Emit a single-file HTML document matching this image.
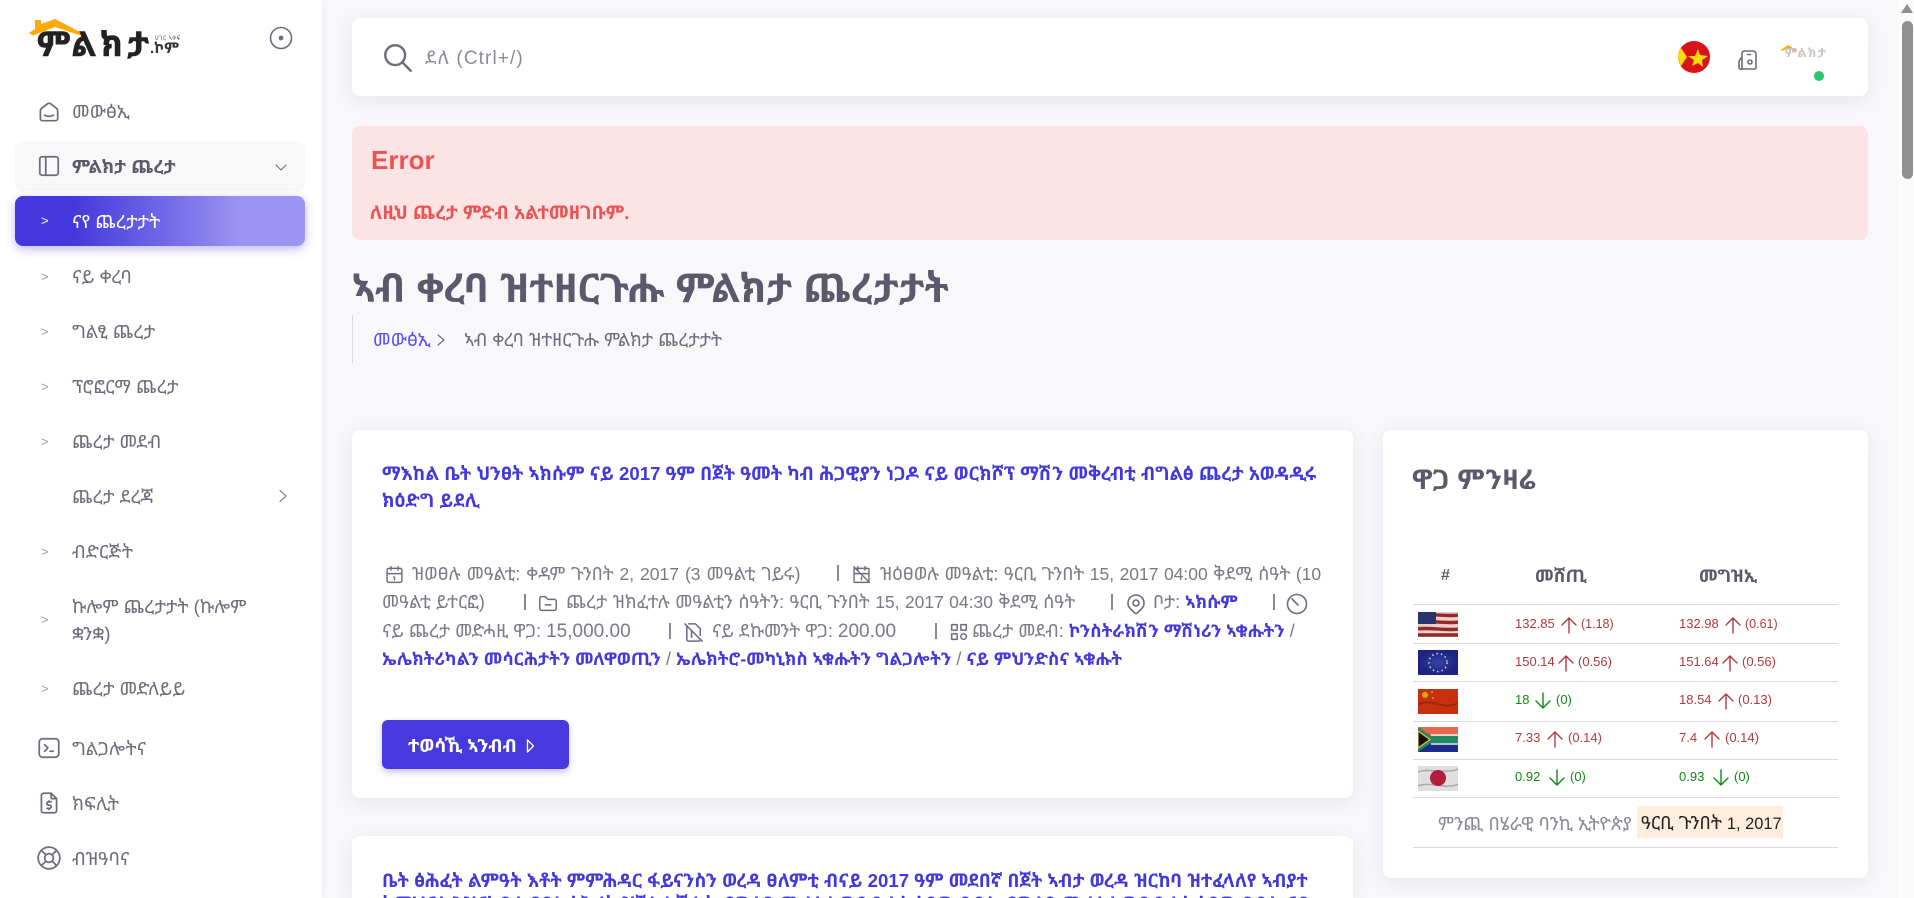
<!DOCTYPE html>
<html lang="ti"><head><meta charset="utf-8"><title>ምልክታ</title>
<style>
*{box-sizing:border-box}
html,body{margin:0;padding:0;width:1914px;height:898px;overflow:hidden;background:#f8f8fb;font-family:"Liberation Sans","Noto Sans Ethiopic","Abyssinica SIL","DejaVu Sans","Noto Sans CJK JP",sans-serif;color:#6f6b7d}
#root{position:relative;width:1914px;height:898px;overflow:hidden;background:#f8f8fb;contain:paint}
.a{position:absolute;white-space:nowrap}
svg.i{position:absolute;fill:none;stroke:#6f6b7d;stroke-width:1.6;stroke-linecap:round;stroke-linejoin:round}
#side{position:absolute;left:0;top:0;width:322px;height:898px;background:#fff;box-shadow:0 0 8px rgba(75,70,92,.06)}
.m{position:absolute;left:72px;font-size:18.5px;line-height:26px;white-space:nowrap;color:#6f6b7d;transform:translateY(-13px)}
.g{position:absolute;left:41px;font-size:13px;line-height:16px;color:#9a97a6;transform:translateY(-8px)}
.card{position:absolute;background:#fff;border-radius:8px;box-shadow:0 4px 18px rgba(75,70,92,.10)}
.t{font-size:18.6px;font-weight:700;color:#4338dc;left:382px;line-height:26px}
.l{font-size:18px;line-height:26px;color:#7c7889}
.n{font-size:17.5px;color:#7c7889}
.n2{font-size:19px;color:#7c7889}
.b{color:#4338dc;font-weight:700;font-size:17.5px}
.sep{position:absolute;width:1.500px;height:16px;background:#8a8797}
.r{position:absolute;left:1413px;width:425px;height:1px;background:#dbdade}
.v{position:absolute;font-size:13px;line-height:18px;white-space:nowrap}
.p{font-size:12px}
.up{color:#b23a3a}.dn{color:#118a11}
svg.ar{stroke-width:1.400}
</style></head><body><div id="root">

<div id="side">
  <svg class="a" style="left:28px;top:16px" width="60" height="24" viewBox="0 0 60 24"><path d="M1 17 L7 13 L7 4 L13 4 L13 8 L27 3 L54 17 L54 20 L27 11 L5 19.500Z" fill="#ffa90a"/></svg>
  <div class="a" style="left:37px;top:27px;font-size:34px;line-height:36px;font-weight:700;letter-spacing:4.200px;color:#222;-webkit-text-stroke:.5px #222">ምልክታ</div>
  <div class="a" style="left:150px;top:41px;font-size:15px;line-height:16px;font-weight:700;color:#333">.ኮም</div>
  <div class="a" style="left:155px;top:36px;font-size:6px;line-height:6px;letter-spacing:.5px;color:#555">ሀገር ኣቀፍ</div>
  <svg class="i" style="left:269px;top:26px" width="24" height="24" viewBox="0 0 24 24"><circle cx="12" cy="12" r="10.5"/><circle cx="12" cy="12" r="1.6" fill="#6f6b7d"/></svg>

  <svg class="i" style="left:36px;top:99px" width="26" height="26" viewBox="0 0 24 24"><path d="M19 8.71l-5.333-4.148a2.666 2.666 0 0 0-3.274 0l-5.334 4.148a2.665 2.665 0 0 0-1.029 2.105v7.2a2 2 0 0 0 2 2h12a2 2 0 0 0 2-2v-7.2c0-.823-.38-1.6-1.03-2.105"/><path d="M16 15c-2.21 1.333-5.792 1.333-8 0"/></svg>
  <div class="m" style="top:112px">መውፅኢ</div>

  <div class="a" style="left:15px;top:141px;width:290px;height:50px;background:#f8f8f8;border-radius:8px"></div>
  <svg class="i" style="left:36px;top:153px" width="26" height="26" viewBox="0 0 24 24"><rect x="3.5" y="3.5" width="17" height="17" rx="2"/><path d="M9 4v16"/></svg>
  <div class="m" style="top:167px;font-weight:700;color:#5d596c">ምልክታ ጨረታ</div>
  <svg class="i" style="left:274px;top:160px" width="14" height="14" viewBox="0 0 14 14"><path d="M2 5l5 5 5-5" stroke-width="1.1"/></svg>

  <div class="a" style="left:15px;top:196px;width:290px;height:50px;border-radius:8px;background:linear-gradient(90deg,#4339dc 0,#4339dc 20%,#7b72ea 58%,#9d95f3 78%,#9d95f3 100%);box-shadow:0 3px 10px rgba(67,57,220,.35)"></div>
  <div class="g" style="top:221px;color:#fff">&gt;</div>
  <div class="m" style="top:222px;color:#fff">ናየ ጨረታታት</div>

  <div class="g" style="top:277px">&gt;</div><div class="m" style="top:277px">ናይ ቀረባ</div>
  <div class="g" style="top:332px">&gt;</div><div class="m" style="top:332px">ግልፂ ጨረታ</div>
  <div class="g" style="top:387px">&gt;</div><div class="m" style="top:387px">ፕሮፎርማ ጨረታ</div>
  <div class="g" style="top:442px">&gt;</div><div class="m" style="top:442px">ጨረታ መደብ</div>
  <div class="m" style="top:497px">ጨረታ ደረጃ</div>
  <svg class="i" style="left:277px;top:488px" width="14" height="16" viewBox="0 0 14 16"><path d="M3 2.500l6 5.500-6 5.500" stroke-width="1.1"/></svg>
  <div class="g" style="top:552px">&gt;</div><div class="m" style="top:552px">ብድርጅት</div>
  <div class="g" style="top:620px">&gt;</div><div class="m" style="top:607px">ኩሎም ጨረታታት (ኩሎም</div><div class="m" style="top:634px">ቋንቋ)</div>
  <div class="g" style="top:689px">&gt;</div><div class="m" style="top:689px">ጨረታ መድለይይ</div>

  <svg class="i" style="left:36px;top:735px" width="26" height="26" viewBox="0 0 24 24"><path d="M8 9l3 3-3 3M13 15h3"/><rect x="3" y="3.500" width="18" height="17" rx="3"/></svg>
  <div class="m" style="top:749px">ግልጋሎትና</div>
  <svg class="i" style="left:36px;top:790px" width="26" height="26" viewBox="0 0 24 24"><path d="M14 3v4a1 1 0 0 0 1 1h4"/><path d="M17 21h-10a2 2 0 0 1-2-2v-14a2 2 0 0 1 2-2h7l5 5v11a2 2 0 0 1-2 2z"/><path d="M14 11h-2.500a1.500 1.500 0 0 0 0 3h1a1.500 1.500 0 0 1 0 3h-2.500M12 17v1m0-8v1"/></svg>
  <div class="m" style="top:804px">ክፍሊት</div>
  <svg class="i" style="left:36px;top:845px" width="26" height="26" viewBox="0 0 24 24"><circle cx="12" cy="12" r="4"/><circle cx="12" cy="12" r="10"/><path d="M15 15l4 4M9 15l-4 4M5 5l4 4M19 5l-4 4"/></svg>
  <div class="m" style="top:859px">ብዝዓባና</div>
</div>

<!-- header -->
<div class="card" style="left:352px;top:18px;width:1516px;height:78px"></div>
<svg class="i" style="left:381px;top:41px;stroke-width:1.7" width="34" height="34" viewBox="0 0 24 24"><circle cx="10" cy="10" r="7"/><path d="M21 21l-6-6"/></svg>
<div class="a" style="left:425px;top:46px;font-size:19px;line-height:26px;letter-spacing:1.100px;color:#8d8a98">ደለ (Ctrl+/)</div>
<svg class="a" style="left:1678px;top:41px" width="32" height="32" viewBox="0 0 32 32"><circle cx="16" cy="16" r="16" fill="#da121a"/><path d="M0 16A16 16 0 0 1 3 7L9 16 3 25A16 16 0 0 1 0 16Z" fill="#fcdd09"/><path d="M20 8l2 6 8 1-6 4 1 7-5-4-6 3 2-6-6-4 7 0z" fill="#fcdd09"/></svg>
<svg class="i" style="left:1736px;top:47px" width="26" height="26" viewBox="0 0 26 26"><path d="M8 4h9a3 3 0 0 1 3 3v13.500a1.500 1.500 0 0 1-1.500 1.500H7.500A1.500 1.500 0 0 1 6 20.500V7a3 3 0 0 1 2-3z"/><path d="M6 10L3 14v6a2 2 0 0 0 3 2"/><circle cx="14" cy="15" r="2"/><path d="M11.500 7.500h3"/></svg>
<svg class="a" style="left:1781px;top:44px" width="16" height="9" viewBox="0 0 16 9"><path d="M0 6L7 1l8 5-1 1-7-3-6 3z" fill="#ffa90a"/></svg>
<div class="a" style="left:1785px;top:46px;font-size:12.500px;line-height:14px;letter-spacing:1.400px;color:#c4c4c4;font-weight:700">ምልክታ</div>
<div class="a" style="left:1814px;top:71px;width:10px;height:10px;border-radius:50%;background:#28c76f"></div>

<!-- alert -->
<div class="a" style="left:352px;top:126px;width:1516px;height:114px;background:#fce4e4;border-radius:8px"></div>
<div class="a" style="left:371px;top:144px;font-size:26px;line-height:32px;font-weight:700;color:#ea5455">Error</div>
<div class="a" style="left:370px;top:200px;font-size:18.700px;line-height:26px;font-weight:700;color:#ea5455">ለዚህ ጨረታ ምድብ አልተመዘገቡም.</div>

<!-- title -->
<div class="a" style="left:352px;top:266px;font-size:39.800px;line-height:46px;font-weight:700;color:#5d596c">ኣብ ቀረባ ዝተዘርጉሑ ምልክታ ጨረታታት</div>
<div class="a" style="left:352px;top:315px;width:1px;height:48px;background:#d6dce1"></div>
<div class="a" style="left:373px;top:327px;font-size:18.500px;line-height:26px;color:#5a50f0">መውፅኢ</div>
<svg class="i" style="left:436px;top:333px" width="10" height="14" viewBox="0 0 10 14"><path d="M2 2l6 5-6 5" stroke-width="1.2"/></svg>
<div class="a" style="left:464px;top:327px;font-size:18.200px;line-height:26px;color:#6f6b7d">ኣብ ቀረባ ዝተዘርጉሑ ምልክታ ጨረታታት</div>

<!-- card 1 -->
<div class="card" style="left:352px;top:430px;width:1001px;height:368px"></div>
<div class="a t" style="top:461px">ማእከል ቤት ህንፀት ኣክሱም ናይ 2017 ዓም በጀት ዓመት ካብ ሕጋዊያን ነጋዶ ናይ ወርክሾፕ ማሽን መቅረብቲ ብግልፅ ጨረታ አወዳዲሩ</div>
<div class="a t" style="top:488px">ክዕድግ ይደሊ</div>

<svg class="i" style="left:384px;top:564px" width="21" height="21" viewBox="0 0 24 24"><rect x="3.500" y="5" width="17" height="16" rx="2"/><path d="M16 3v4M8 3v4M4 11h16M11 15h1v3"/></svg>
<div class="a l" style="left:412px;top:561px;word-spacing:1px">ዝወፀሉ መዓልቲ: ቀዳም ጉንበት <span class="n">2, 2017</span> <span class="n">(3</span> መዓልቲ ገይሩ)</div>
<div class="sep" style="left:837px;top:565px"></div>
<svg class="i" style="left:851px;top:564px" width="21" height="21" viewBox="0 0 24 24"><rect x="3.500" y="5" width="17" height="16" rx="1"/><path d="M16 3v4M8 3v4M4 11h16M3 3l18 18M12 15v3"/></svg>
<div class="a l" style="left:880px;top:561px;word-spacing:.6px">ዝዕፀወሉ መዓልቲ: ዓርቢ ጉንበት <span class="n">15, 2017 04:00</span> ቅደሚ ሰዓት <span class="n">(10</span></div>

<div class="a l" style="left:382px;top:589px">መዓልቲ ይተርፎ)</div>
<div class="sep" style="left:524px;top:594px"></div>
<svg class="i" style="left:537px;top:593px" width="22" height="22" viewBox="0 0 24 24"><path d="M5 4h4l3 3h7a2 2 0 0 1 2 2v8a2 2 0 0 1-2 2h-14a2 2 0 0 1-2-2v-11a2 2 0 0 1 2-2M9 13h6"/></svg>
<div class="a l" style="left:566px;top:589px;word-spacing:.5px">ጨረታ ዝክፈተሉ መዓልቲን ሰዓትን: ዓርቢ ጉንበት <span class="n">15, 2017 04:30</span> ቅደሚ ሰዓት</div>
<div class="sep" style="left:1111px;top:594px"></div>
<svg class="i" style="left:1124px;top:592px" width="24" height="24" viewBox="0 0 24 24"><circle cx="12" cy="11" r="3"/><path d="M17.657 16.657l-4.243 4.243a2 2 0 0 1-2.827 0l-4.244-4.243a8 8 0 1 1 11.314 0z"/></svg>
<div class="a l" style="left:1153px;top:589px">ቦታ: <span class="b">ኣክሱም</span></div>
<div class="sep" style="left:1273px;top:594px"></div>
<svg class="i" style="left:1285px;top:592px" width="24" height="24" viewBox="0 0 24 24"><circle cx="12" cy="12" r="9.500"/><path d="M7 7l6 6"/></svg>

<div class="a l" style="left:382px;top:618px">ናይ ጨረታ መድሓዚ ዋጋ: <span class="n2">15,000.00</span></div>
<div class="sep" style="left:669px;top:623px"></div>
<svg class="i" style="left:682px;top:621px" width="23" height="23" viewBox="0 0 24 24"><path d="M3 3l18 18M7 3h7l5 5v7M19 19a2 2 0 0 1-2 2h-10a2 2 0 0 1-2-2v-14"/><path d="M10 17V10"/></svg>
<div class="a l" style="left:712px;top:618px">ናይ ደኩመንት ዋጋ: <span class="n2">200.00</span></div>
<div class="sep" style="left:935px;top:623px"></div>
<svg class="i" style="left:948px;top:621px" width="22" height="22" viewBox="0 0 24 24"><path d="M4 4h6v6h-6zM14 4h6v6h-6zM4 14h6v6h-6z"/><circle cx="17" cy="17" r="3"/></svg>
<div class="a l" style="left:972px;top:618px">ጨረታ መደብ: <span class="b">ኮንስትራክሽን ማሽነሪን ኣቁሑትን</span> /</div>
<div class="a l" style="left:382px;top:646px"><span class="b">ኤሌክትሪካልን መሳርሕታትን መለዋወጢን</span> / <span class="b">ኤሌክትሮ-መካኒክስ ኣቁሑትን ግልጋሎትን</span> / <span class="b">ናይ ምህንድስና ኣቁሑት</span></div>

<div class="a" style="left:382px;top:720px;width:187px;height:49px;background:#4639de;border-radius:6px;box-shadow:0 3px 7px rgba(70,57,222,.3)"></div>
<div class="a" style="left:408px;top:733px;font-size:18.500px;line-height:26px;font-weight:700;color:#fff">ተወሳኺ ኣንብብ</div>
<svg class="i" style="left:525px;top:738px;stroke:#fff" width="12" height="16" viewBox="0 0 12 16"><path d="M2.500 2l6 6-6 6z" stroke-width="1.400"/></svg>

<!-- card 2 -->
<div class="card" style="left:352px;top:836px;width:1001px;height:62px;border-radius:8px 8px 0 0;overflow:hidden">
  <div class="a t" style="left:30px;top:32px">ቤት ፅሕፈት ልምዓት እቶት ምምሕዳር ፋይናንስን ወረዳ ፀለምቲ ብናይ 2017 ዓም መደበኛ በጀት ኣብታ ወረዳ ዝርከባ ዝተፈላለየ ኣብያተ</div>
  <div class="a t" style="left:30px;top:55px;height:7px;overflow:hidden;width:940px">ትምህርቲ ንዝርከባ ኣብያተ ፅሕፈት ዝኾኑ ኣቑሑት ብግልፂ ጨረታ ኣወዳዲሩ ክዕድግ ይደሊ ብግልፂ ጨረታ ኣወዳዲሩ ክዕድግ ይደሊ ናይ</div>
</div>

<!-- right card -->
<div class="card" style="left:1383px;top:430px;width:485px;height:448px"></div>
<div class="a" style="left:1412px;top:464px;font-size:27.500px;line-height:32px;font-weight:700;color:#5d596c">ዋጋ ምንዛሬ</div>
<div class="a" style="left:1441px;top:567px;font-size:16px;line-height:18px;font-weight:700;color:#5d596c">#</div>
<div class="a" style="left:1535px;top:563px;font-size:17.800px;line-height:26px;font-weight:700;color:#5d596c">መሸጢ</div>
<div class="a" style="left:1699px;top:563px;font-size:17.800px;line-height:26px;font-weight:700;color:#5d596c">መግዝኢ</div>
<div class="r" style="top:604px"></div><div class="r" style="top:643px"></div><div class="r" style="top:681px"></div><div class="r" style="top:721px"></div><div class="r" style="top:759px"></div><div class="r" style="top:797px"></div><div class="r" style="top:847px"></div>

<!-- flags -->
<svg class="a" style="left:1418px;top:612px" width="40" height="25" viewBox="0 0 40 25"><rect width="40" height="25" fill="#f0cfc6"/><path d="M0 3C10 1 28 5 40 3M0 10C10 8 28 12 40 10M0 17C10 15 28 19 40 17M0 23h40" stroke="#8f2a2e" stroke-width="3.400" fill="none"/><rect width="18" height="12" fill="#2a3468"/></svg>
<svg class="a" style="left:1418px;top:650px" width="40" height="25" viewBox="0 0 40 25"><defs><radialGradient id="e"><stop offset="0" stop-color="#3342a8"/><stop offset="1" stop-color="#1c2380"/></radialGradient></defs><rect width="40" height="25" fill="url(#e)"/><circle cx="20" cy="12.500" r="9" fill="none" stroke="#d9d9c8" stroke-width="1.500" stroke-dasharray="1.500 3"/></svg>
<svg class="a" style="left:1418px;top:689px" width="40" height="25" viewBox="0 0 40 25"><rect width="40" height="25" fill="#c6300f"/><path d="M0 16C12 8 26 22 40 14" stroke="#a32509" stroke-width="2" fill="none"/><circle cx="7" cy="6" r="3" fill="#d9a512"/><circle cx="14" cy="3" r="1" fill="#d9a512"/><circle cx="15" cy="9" r="1" fill="#d9a512"/></svg>
<svg class="a" style="left:1418px;top:727px" width="40" height="25" viewBox="0 0 40 25"><rect width="40" height="9" fill="#e8674e"/><rect y="16" width="40" height="9" fill="#1e2a8a"/><rect y="9" width="40" height="7" fill="#1d8a62"/><path d="M0 0L18 12.500 0 25" fill="#1d8a62"/><path d="M0 4L12 12.500 0 21z" fill="#111" stroke="#e8c040" stroke-width="1.200"/><path d="M13 8h27M13 17h27" stroke="#f4f0ea" stroke-width="1.500"/></svg>
<svg class="a" style="left:1418px;top:766px" width="40" height="25" viewBox="0 0 40 25"><rect width="40" height="25" fill="#dfdfdf"/><path d="M0 20C12 15 28 24 40 18M0 6C10 2 30 8 40 3" stroke="#aaa" stroke-width="1.500" fill="none"/><circle cx="20" cy="12" r="8" fill="#b01f3f"/></svg>

<!-- values -->
<div class="v up" style="left:1515px;top:615px">132.85</div><svg class="i ar" style="left:1560px;top:616px;stroke:#b23a3a" width="18" height="18" viewBox="0 0 18 18"><path d="M9 2v15M2 9l7-7 7 7"/></svg><div class="v up" style="left:1581px;top:615px;font-size:12.500px">(1.18)</div>
<div class="v up" style="left:1679px;top:615px">132.98</div><svg class="i ar" style="left:1724px;top:616px;stroke:#b23a3a" width="18" height="18" viewBox="0 0 18 18"><path d="M9 2v15M2 9l7-7 7 7"/></svg><div class="v up" style="left:1745px;top:615px;font-size:12.500px">(0.61)</div>
<div class="v up" style="left:1515px;top:653px">150.14</div><svg class="i ar" style="left:1557px;top:654px;stroke:#b23a3a" width="18" height="18" viewBox="0 0 18 18"><path d="M9 2v15M2 9l7-7 7 7"/></svg><div class="v up p" style="left:1578px;top:653px;font-size:13px">(0.56)</div>
<div class="v up" style="left:1679px;top:653px">151.64</div><svg class="i ar" style="left:1721px;top:654px;stroke:#b23a3a" width="18" height="18" viewBox="0 0 18 18"><path d="M9 2v15M2 9l7-7 7 7"/></svg><div class="v up" style="left:1742px;top:653px;font-size:13px">(0.56)</div>
<div class="v dn" style="left:1515px;top:691px">18</div><svg class="i ar" style="left:1534px;top:692px;stroke:#118a11" width="18" height="18" viewBox="0 0 18 18"><path d="M9 1v15M2 9l7 7 7-7"/></svg><div class="v dn" style="left:1556px;top:691px">(0)</div>
<div class="v up" style="left:1679px;top:691px">18.54</div><svg class="i ar" style="left:1717px;top:692px;stroke:#b23a3a" width="18" height="18" viewBox="0 0 18 18"><path d="M9 2v15M2 9l7-7 7 7"/></svg><div class="v up" style="left:1738px;top:691px">(0.13)</div>
<div class="v up" style="left:1515px;top:729px">7.33</div><svg class="i ar" style="left:1546px;top:730px;stroke:#b23a3a" width="18" height="18" viewBox="0 0 18 18"><path d="M9 2v15M2 9l7-7 7 7"/></svg><div class="v up" style="left:1568px;top:729px">(0.14)</div>
<div class="v up" style="left:1679px;top:729px">7.4</div><svg class="i ar" style="left:1703px;top:730px;stroke:#b23a3a" width="18" height="18" viewBox="0 0 18 18"><path d="M9 2v15M2 9l7-7 7 7"/></svg><div class="v up" style="left:1725px;top:729px">(0.14)</div>
<div class="v dn" style="left:1515px;top:768px">0.92</div><svg class="i ar" style="left:1548px;top:769px;stroke:#118a11" width="18" height="18" viewBox="0 0 18 18"><path d="M9 1v15M2 9l7 7 7-7"/></svg><div class="v dn" style="left:1570px;top:768px">(0)</div>
<div class="v dn" style="left:1679px;top:768px">0.93</div><svg class="i ar" style="left:1712px;top:769px;stroke:#118a11" width="18" height="18" viewBox="0 0 18 18"><path d="M9 1v15M2 9l7 7 7-7"/></svg><div class="v dn" style="left:1734px;top:768px">(0)</div>

<div class="a" style="left:1438px;top:811px;font-size:18.300px;line-height:26px;color:#8a8797">ምንጪ በሄራዊ ባንኪ ኢትዮጵያ</div>
<div class="a" style="left:1637px;top:806px;width:146px;height:32px;background:#ffeedd"></div>
<div class="a" style="left:1641px;top:810px;font-size:18.300px;line-height:26px;color:#222">ዓርቢ ጉንበት <span style="font-size:16.400px">1, 2017</span></div>

<!-- scrollbar -->
<div class="a" style="left:1898px;top:0;width:16px;height:898px;background:#fbfbfb"></div>
<div class="a" style="left:1901px;top:4px;width:0;height:0;border-left:6.500px solid transparent;border-right:6.500px solid transparent;border-bottom:9px solid #8f8f8f"></div>
<div class="a" style="left:1902px;top:21px;width:11px;height:158px;background:#8f8f8f;border-radius:6px"></div>
</div></body></html>
